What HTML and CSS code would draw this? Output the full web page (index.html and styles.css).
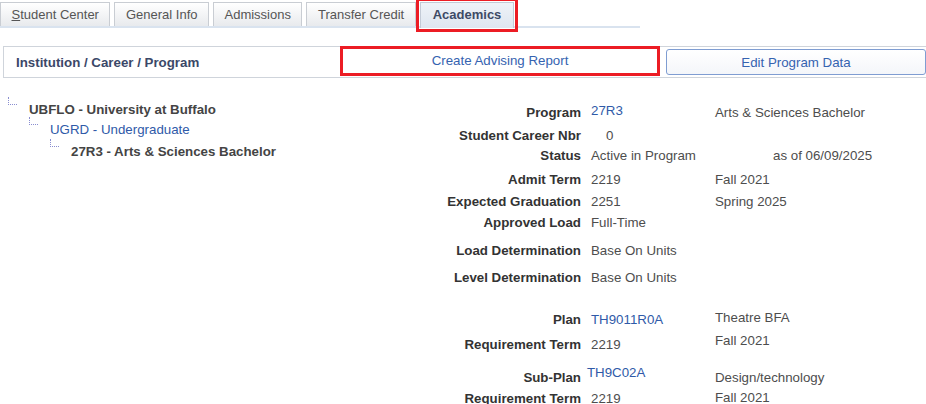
FILE: index.html
```html
<!DOCTYPE html>
<html lang="en">
<head>
    <meta charset="UTF-8">
    <meta name="viewport" content="width=device-width, initial-scale=1.0">
    <title>Academics</title>
    <link rel="stylesheet" href="styles.css">
</head>
<body>
    <div class="tabbar">
        <a class="tab"><u>S</u>tudent Center</a>
        <a class="tab">General Info</a>
        <a class="tab">Admissions</a>
        <a class="tab">Transfer Credit</a>
        <a class="tab active">Academics</a>
    </div>

    <div class="panel-head">
        <div class="panel-title">Institution / Career / Program</div>
        <button class="btn btn-marked">Create Advising Report</button>
        <button class="btn btn-edit">Edit Program Data</button>
    </div>

    <div class="content">
        <div class="tree">
            <div class="node lvl1 strong">UBFLO - University at Buffalo</div>
            <div class="node lvl2 link">UGRD - Undergraduate</div>
            <div class="node lvl3 strong">27R3 - Arts &amp; Sciences Bachelor</div>
        </div>

        <div class="details">
            <div class="lbl">Program</div>
            <div class="val link up2">27R3</div>
            <div class="val">Arts &amp; Sciences Bachelor</div>

            <div class="lbl">Student Career Nbr</div>
            <div class="val indent">0</div>
            <div class="val"></div>

            <div class="lbl">Status</div>
            <div class="val">Active in Program</div>
            <div class="val asof">as of 06/09/2025</div>

            <div class="lbl">Admit Term</div>
            <div class="val">2219</div>
            <div class="val">Fall 2021</div>

            <div class="lbl">Expected Graduation</div>
            <div class="val">2251</div>
            <div class="val">Spring 2025</div>

            <div class="lbl">Approved Load</div>
            <div class="val">Full-Time</div>
            <div class="val"></div>

            <div class="lbl">Load Determination</div>
            <div class="val">Base On Units</div>
            <div class="val"></div>

            <div class="lbl">Level Determination</div>
            <div class="val">Base On Units</div>
            <div class="val"></div>

            <div class="lbl">Plan</div>
            <div class="val link">TH9011R0A</div>
            <div class="val up2">Theatre BFA</div>

            <div class="lbl">Requirement Term</div>
            <div class="val">2219</div>
            <div class="val up4">Fall 2021</div>

            <div class="lbl">Sub-Plan</div>
            <div class="val link up5 pull">TH9C02A</div>
            <div class="val">Design/technology</div>

            <div class="lbl">Requirement Term</div>
            <div class="val">2219</div>
            <div class="val up1">Fall 2021</div>
        </div>
    </div>
</body>
</html>
```

FILE: styles.css
```css
body {
    margin: 0;
    font-family: "Liberation Sans", Arial, sans-serif;
    font-size: 13.3px;
    color: #444;
    background: #fff;
}

/* tabs */
.tabbar {
    display: flex;
    align-items: flex-end;
    gap: 4px;
    width: 640px;
    height: 24px;
    padding-top: 2px;
    border-bottom: 2px solid #d9e3ef;
    font-size: 13px;
}
.tab {
    height: 24px;
    box-sizing: border-box;
    padding: 0 10.5px;
    line-height: 23px;
    border: 1px solid #c9cdd3;
    border-bottom: none;
    background: linear-gradient(#ffffff, #e8eaed);
    color: #555;
    white-space: nowrap;
}
.tab u { text-decoration: underline; }
.tab.active {
    height: 26px;
    margin-bottom: -2px;
    padding: 0 12px;
    font-weight: bold;
    color: #3d4a66;
    background: linear-gradient(#eef2f8, #dfe6f0);
    border-color: #c3cad6;
    outline: 3px solid #ec1c24;
    outline-offset: 1px;
}

/* header strip */
.panel-head {
    display: grid;
    grid-template-columns: 1fr 320px 260px;
    column-gap: 6px;
    align-items: center;
    height: 30px;
    margin: 18px 0 0 3px;
    padding-left: 12px;
    border: 1px solid #cfd4db;
    border-right: none;
}
.panel-title {
    font-weight: bold;
    color: #3b4868;
}
.btn {
    font-family: inherit;
    font-size: 13.3px;
    color: #3563b0;
    background: #fff;
    cursor: pointer;
}
.btn-marked {
    height: 30px;
    margin-top: -3px;
    border: 3px solid #ec1c24;
}
.btn-edit {
    height: 26px;
    border: 1px solid #7f9dd2;
    border-radius: 3px;
    background: linear-gradient(#ffffff, #f4f6fa);
}

/* body */
.content {
    display: flex;
    align-items: flex-start;
    padding-top: 19px;
}
.tree {
    width: 430px;
    padding-top: 3px;
}
.node {
    display: flex;
    align-items: flex-start;
    line-height: 20px;
}
.node::before {
    content: "";
    flex: none;
    width: 9px;
    height: 8px;
    margin: -3px 12px 0 0;
    border-left: 1px dotted #8a8ed0;
    border-bottom: 1px dotted #8a8ed0;
    box-sizing: border-box;
}
.lvl1 { margin-left: 8px; }
.lvl2 { margin-left: 29px; }
.lvl3 { margin-left: 50px; margin-top: 2px; }
.strong { font-weight: bold; color: #444; }
.link { color: #2f5aa8; }

.details {
    display: grid;
    grid-template-columns: 151px 114px 1fr;
    grid-template-rows: 23px 23px 20px 24px 22px 21px 28px 27px 42px 25px 33px 21px;
    column-gap: 10px;
    align-items: end;
    margin-top: 1px;
    line-height: 16px;
}
.lbl {
    text-align: right;
    font-weight: bold;
    color: #333;
    white-space: nowrap;
}
.val {
    color: #4d4d4d;
    white-space: nowrap;
}
.val.link { color: #2f5aa8; }
.indent { padding-left: 15px; }
.asof { padding-left: 58px; }
.pull { margin-left: -4px; }
.up1 { margin-bottom: 1px; }
.up2 { margin-bottom: 2px; }
.up4 { margin-bottom: 4px; }
.up5 { margin-bottom: 5px; }
```
